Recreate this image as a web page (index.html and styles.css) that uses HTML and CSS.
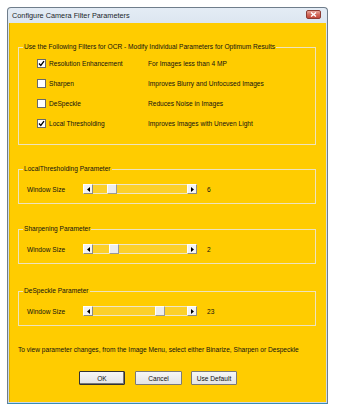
FILE: index.html
```html
<!DOCTYPE html>
<html>
<head>
<meta charset="utf-8">
<link rel="stylesheet" href="styles.css">
</head>
<body>
<div class="window">
  <div class="titlebar">
    <span class="title">Configure Camera Filter Parameters</span>
    <span class="close"><svg width="7" height="5" viewBox="0 0 7 5"><path d="M1 0.5 L6 4.5 M6 0.5 L1 4.5" stroke="#fff" stroke-width="1.4"/></svg></span>
  </div>
  <div class="client">
    <fieldset class="group filters">
      <legend>Use the Following Filters for OCR - Modify Individual Parameters for Optimum Results</legend>
      <div class="filter-grid">
        <div class="opt"><span class="cb"><svg width="7" height="7" viewBox="0 0 7 7"><path d="M1 3.5 L2.8 5.5 L6 1.2" fill="none" stroke="#000" stroke-width="1.3"/></svg></span><span>Resolution Enhancement</span></div>
        <div class="desc">For Images less than 4 MP</div>
        <div class="opt"><span class="cb"></span><span>Sharpen</span></div>
        <div class="desc">Improves Blurry and Unfocused Images</div>
        <div class="opt"><span class="cb"></span><span>DeSpeckle</span></div>
        <div class="desc">Reduces Noise in Images</div>
        <div class="opt"><span class="cb"><svg width="7" height="7" viewBox="0 0 7 7"><path d="M1 3.5 L2.8 5.5 L6 1.2" fill="none" stroke="#000" stroke-width="1.3"/></svg></span><span>Local Thresholding</span></div>
        <div class="desc">Improves Images with Uneven Light</div>
      </div>
    </fieldset>

    <fieldset class="group param first">
      <legend>LocalThresholding Parameter</legend>
      <div class="param-row">
        <span class="plabel">Window Size</span>
        <div class="scroll">
          <span class="arrow"><svg width="3" height="5" viewBox="0 0 3 5"><path d="M3 0 L0 2.5 L3 5 Z" fill="#000"/></svg></span>
          <span class="track"><span class="thumb" style="margin-left:14px"></span></span>
          <span class="arrow"><svg width="3" height="5" viewBox="0 0 3 5"><path d="M0 0 L3 2.5 L0 5 Z" fill="#000"/></svg></span>
        </div>
        <span class="val">6</span>
      </div>
    </fieldset>

    <fieldset class="group param">
      <legend>Sharpening Parameter</legend>
      <div class="param-row">
        <span class="plabel">Window Size</span>
        <div class="scroll">
          <span class="arrow"><svg width="3" height="5" viewBox="0 0 3 5"><path d="M3 0 L0 2.5 L3 5 Z" fill="#000"/></svg></span>
          <span class="track"><span class="thumb" style="margin-left:16px"></span></span>
          <span class="arrow"><svg width="3" height="5" viewBox="0 0 3 5"><path d="M0 0 L3 2.5 L0 5 Z" fill="#000"/></svg></span>
        </div>
        <span class="val">2</span>
      </div>
    </fieldset>

    <fieldset class="group param last">
      <legend>DeSpeckle Parameter</legend>
      <div class="param-row">
        <span class="plabel">Window Size</span>
        <div class="scroll">
          <span class="arrow"><svg width="3" height="5" viewBox="0 0 3 5"><path d="M3 0 L0 2.5 L3 5 Z" fill="#000"/></svg></span>
          <span class="track"><span class="thumb" style="margin-left:62px"></span></span>
          <span class="arrow"><svg width="3" height="5" viewBox="0 0 3 5"><path d="M0 0 L3 2.5 L0 5 Z" fill="#000"/></svg></span>
        </div>
        <span class="val">23</span>
      </div>
    </fieldset>

    <p class="hint">To view parameter changes, from the Image Menu, select either Binarize, Sharpen or Despeckle</p>

    <div class="buttons">
      <button class="btn default">OK</button>
      <button class="btn cancel">Cancel</button>
      <button class="btn">Use Default</button>
    </div>
  </div>
</div>
</body>
</html>
```
FILE: styles.css
```css
body {
  margin: 0;
  background: #fff;
  font-family: "Liberation Sans", Arial, sans-serif;
  font-size: 6.6px;
  color: #111;
}

.window {
  margin: 7px 0 0 7px;
  width: 321px;
  height: 397px;
  box-sizing: border-box;
  border: 1px solid #6f7d8b;
  border-bottom-color: #3a8cb4;
  border-radius: 4px 4px 0 0;
  background: linear-gradient(#e4ecf5, #d5e0ec 30px, #ccd9e8);
  padding: 0 1px 1px;
  display: flex;
  flex-direction: column;
}

.titlebar {
  height: 15px;
  display: flex;
  align-items: center;
  padding-left: 3px;
}

.title {
  flex: 1;
  font-size: 7.3px;
  color: #1a1f2a;
}

.close {
  align-self: flex-start;
  margin: 2px 5px 0 0;
  width: 15px;
  height: 9px;
  box-sizing: border-box;
  border: 1px solid #8c3b33;
  border-radius: 2px;
  background: linear-gradient(#e9a89c, #d26a5c 50%, #c4473a);
  display: flex;
  align-items: center;
  justify-content: center;
}

.client {
  flex: 1;
  background: #ffcc00;
  padding: 20px 10px 0 9px;
  box-shadow: inset 1px 0 0 #d9b100;
}

.group {
  margin: 0;
  padding: 0;
  border: 1px solid #eee3bd;
  min-width: 0;
}

.group legend {
  margin-left: 4px;
  padding: 0 1px;
  line-height: 8px;
  font-size: 6.6px;
}

.filter-grid {
  display: grid;
  grid-template-columns: 111px 1fr;
  grid-auto-rows: 20px;
  padding: 2px 0 11px 18px;
  align-items: center;
}

.opt {
  display: flex;
  align-items: center;
  gap: 3px;
}

.cb {
  width: 9px;
  height: 9px;
  box-sizing: border-box;
  border: 1px solid #6a6a6a;
  background: #fff;
  display: flex;
  align-items: center;
  justify-content: center;
}

.param {
  margin-top: 21px;
}

.param.first {
  margin-top: 20px;
}

.param.last {
  margin-top: 23px;
}

.param-row {
  display: flex;
  align-items: center;
  height: 10px;
  padding: 11px 0 9px 8px;
}

.plabel {
  width: 56px;
}

.scroll {
  display: flex;
  width: 114px;
  height: 10px;
}

.arrow {
  width: 10px;
  height: 10px;
  box-sizing: border-box;
  background: #f3f3f3;
  border: 1px solid;
  border-color: #fff #8a8a8a #8a8a8a #fff;
  display: flex;
  align-items: center;
  justify-content: center;
}

.track {
  flex: 1;
  display: flex;
  background: #fcd02a;
  box-shadow: inset 0 1px 0 #efe6c8, inset 0 -1px 0 #efe6c8;
}

.thumb {
  width: 10px;
  height: 10px;
  box-sizing: border-box;
  background: #ededed;
  border: 1px solid;
  border-color: #fff #999 #999 #fff;
}

.val {
  margin-left: 10px;
}

.hint {
  margin: 20px 0 0;
  line-height: 8px;
}

.buttons {
  display: flex;
  margin-top: 17px;
  padding-left: 61px;
  gap: 10px;
}

.btn {
  width: 46px;
  height: 14px;
  padding: 0;
  box-sizing: border-box;
  font-family: "Liberation Sans", Arial, sans-serif;
  font-size: 6.6px;
  color: #111;
  background: linear-gradient(#f6f6f6, #e4e4e4);
  border: 1px solid #7a7a7a;
  border-radius: 1px;
}

.btn.default {
  border: 1px solid #333;
  box-shadow: inset -1px -1px 0 #777;
}

.btn.cancel {
  width: 47px;
}

.buttons .btn.cancel + .btn {
  margin-left: -1px;
}
```
